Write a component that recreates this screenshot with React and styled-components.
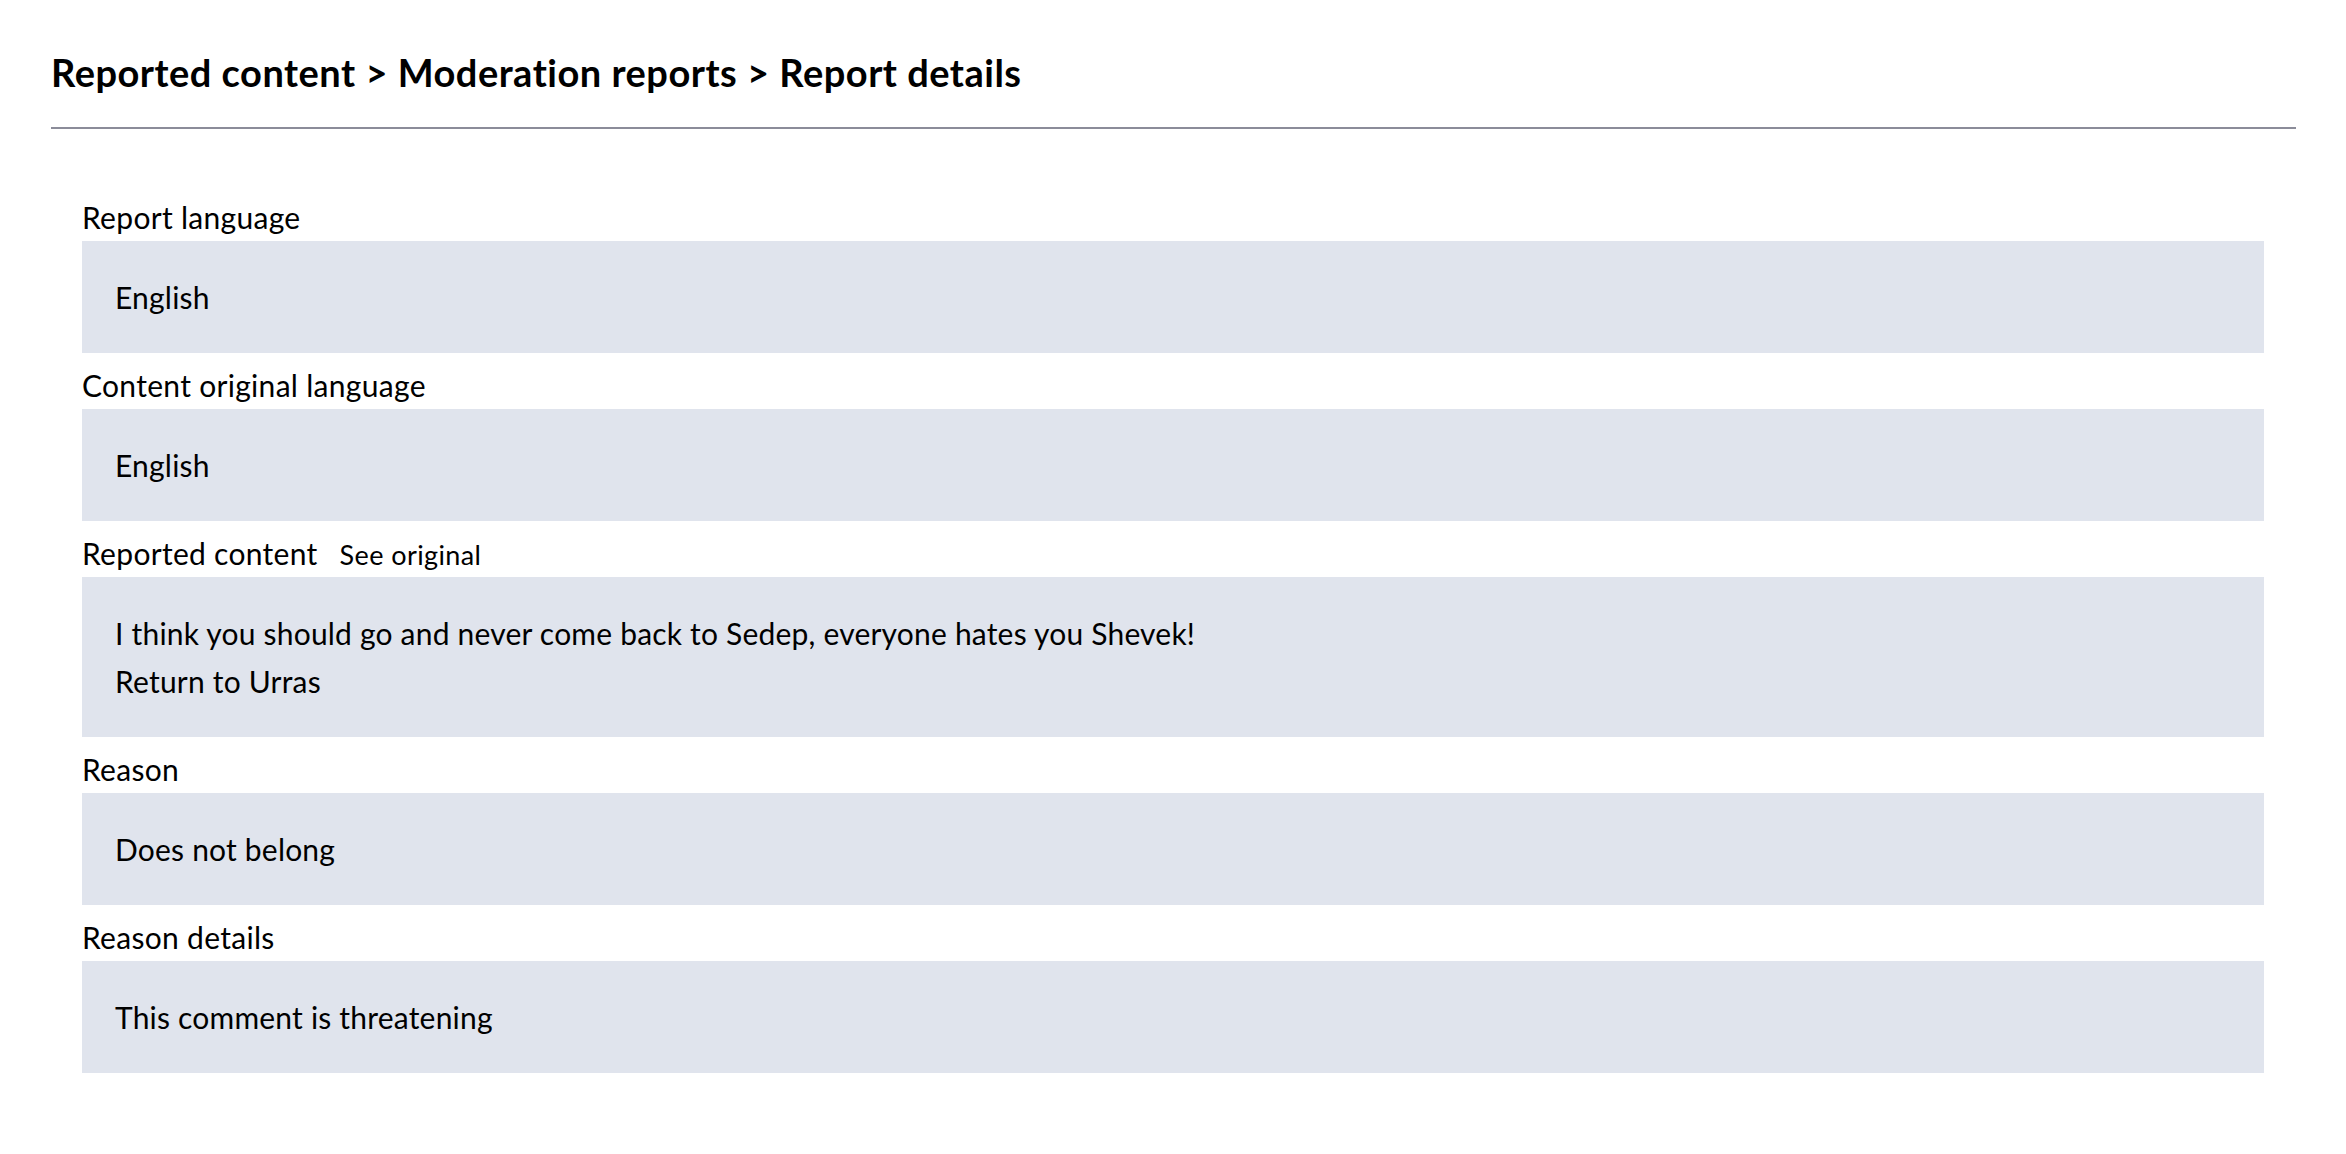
import React from 'react';
import styled, { createGlobalStyle } from 'styled-components';

const GlobalStyle = createGlobalStyle`
  html, body {
    margin: 0;
    padding: 0;
    background: #ffffff;
  }
  body {
    font-family: Lato, "Noto Sans", sans-serif;
    color: #000000;
  }
`;

const Page = styled.div`
  padding: 0 50px 0 51px;
`;

const Header = styled.header`
  box-sizing: border-box;
  height: 129px;
  padding-top: 49px;
  border-bottom: 2px solid #8b8c99;
`;

const Title = styled.h1`
  margin: 0;
  font-size: 38px;
  line-height: 46px;
  font-weight: 700;
  letter-spacing: 0.5px;
`;

const Details = styled.section`
  padding: 64px 32px 0 31px;
  display: flex;
  flex-direction: column;
  gap: 8px;
`;

const Field = styled.div`
  display: flex;
  flex-direction: column;
`;

const Label = styled.div`
  display: flex;
  align-items: baseline;
  gap: 22px;
  font-size: 30px;
  line-height: 48px;
  height: 48px;
  letter-spacing: 0.3px;
`;

const LabelLink = styled.span`
  font-size: 27px;
  letter-spacing: 0.4px;
`;

const Value = styled.div`
  background: #e0e4ed;
  padding: 32px 33px;
  font-size: 30px;
  line-height: 48px;
  letter-spacing: 0.2px;
`;

const fields = [
  { label: 'Report language', lines: ['English'] },
  { label: 'Content original language', lines: ['English'] },
  {
    label: 'Reported content',
    link: 'See original',
    lines: [
      'I think you should go and never come back to Sedep, everyone hates you Shevek!',
      'Return to Urras',
    ],
  },
  { label: 'Reason', lines: ['Does not belong'] },
  { label: 'Reason details', lines: ['This comment is threatening'] },
];

const App = () => {
  return (
    <>
      <GlobalStyle />
      <Page>
        <Header>
          <Title>Reported content &gt; Moderation reports &gt; Report details</Title>
        </Header>
        <Details>
          {fields.map(field => (
            <Field key={field.label}>
              <Label>
                {field.label}
                {field.link && <LabelLink>{field.link}</LabelLink>}
              </Label>
              <Value>
                {field.lines.map(line => (
                  <div key={line}>{line}</div>
                ))}
              </Value>
            </Field>
          ))}
        </Details>
      </Page>
    </>
  );
};

export default App;
